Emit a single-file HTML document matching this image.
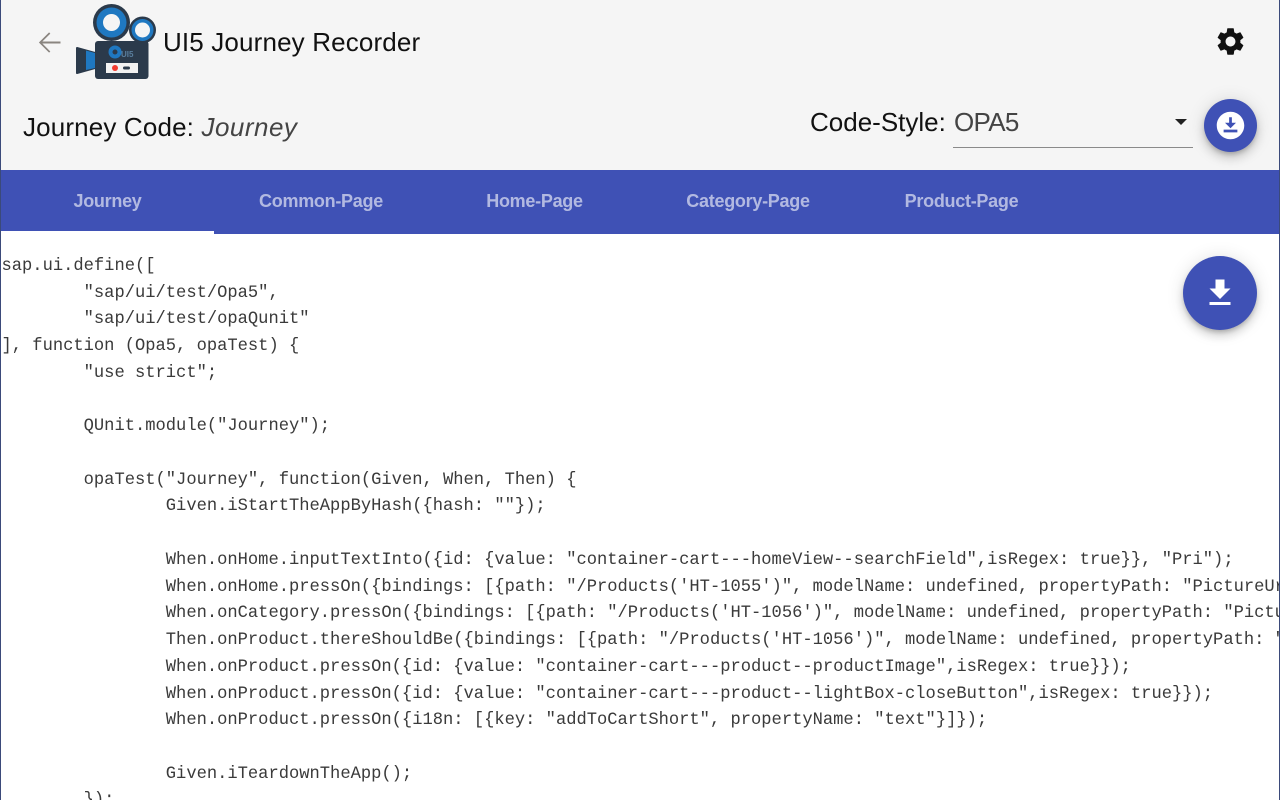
<!DOCTYPE html>
<html lang="en"><head><meta charset="utf-8"><title>UI5 Journey Recorder</title>
<style>
html,body{margin:0;padding:0;width:1280px;height:800px;overflow:hidden;background:#fff}
body{position:relative;font-family:"Liberation Sans",sans-serif;color:#111}
#all{position:absolute;left:0;top:0;width:1280px;height:800px;overflow:hidden;filter:blur(.35px)}
.a{position:absolute;white-space:nowrap}
#head{left:0;top:0;width:1280px;height:170px;background:#f5f5f5}
#bar{left:0;top:170px;width:1280px;height:64px;background:#3f51b5}
#ind{left:0;top:231px;width:214px;height:3px;background:#fff}
.tab{top:170px;height:62px;line-height:62px;width:214px;text-align:center;font-size:18px;font-weight:bold;color:rgba(255,255,255,.6);letter-spacing:-.28px}
#code{position:absolute;left:0;top:234px;width:1280px;height:566px;overflow:hidden}
pre{position:absolute;margin:0;left:1.500px;top:20px;font:17.12px/26.72px "Liberation Mono",monospace;color:#3a3a3a;tab-size:8;white-space:pre}
#edgeL{left:0;top:0;width:1px;height:800px;background:#3b4a7a}
#edgeR{left:1279px;top:0;width:1px;height:800px;background:#3b4a7a}
.fab{border-radius:50%;background:#3f51b5;box-shadow:0 3px 5px -1px rgba(0,0,0,.2),0 6px 10px 0 rgba(0,0,0,.14),0 1px 18px 0 rgba(0,0,0,.12)}
</style></head><body><div id="all">
<div class="a" id="head"></div>
<svg class="a" style="left:33px;top:26px" width="33" height="33" viewBox="0 0 24 24"><path fill="#8a8580" d="M20 11.300H6.800l5.800-5.800-.9-.9L4.300 12l7.400 7.400.9-.9-5.800-5.800H20z"/></svg>
<svg class="a" style="left:74px;top:0" width="84" height="84" viewBox="0 0 84 84">
<circle cx="37.500" cy="22.500" r="18.500" fill="#2b3a4b"/><circle cx="37.500" cy="22.500" r="15" fill="#1f78c1"/><circle cx="37.500" cy="22.500" r="8.500" fill="#f5f5f5"/>
<circle cx="68.500" cy="30" r="13.500" fill="#2b3a4b"/><circle cx="68.500" cy="30" r="11" fill="#1f78c1"/><circle cx="68.500" cy="30" r="7.500" fill="#f5f5f5"/>
<rect x="21" y="41" width="53.500" height="38" rx="3" fill="#2b3a4b"/>
<path d="M3 48l18 5v15l-18 5z" fill="#2b3a4b" stroke="#2b3a4b" stroke-width="2" stroke-linejoin="round"/><path d="M12 50.500l9 2.500v15l-9 2z" fill="#1f78c1"/>
<circle cx="41" cy="52" r="6.500" fill="#1f78c1"/><circle cx="41" cy="52" r="2.500" fill="#2b3a4b"/>
<text x="47" y="57" font-family="Liberation Sans" font-size="8" font-weight="bold" fill="#5a7f9f">UI5</text>
<rect x="32" y="63" width="32" height="10" fill="#f2f2f2"/><circle cx="41" cy="68" r="3" fill="#f23b30"/><rect x="49" y="66.500" width="7" height="3" rx="1.500" fill="#2b3a4b"/>
</svg>
<div class="a" style="left:163px;top:26px;font-size:26px;line-height:32px;letter-spacing:.15px">UI5 Journey Recorder</div>
<svg class="a" style="left:1214px;top:25px" width="33" height="33" viewBox="0 0 24 24"><path fill="#111" d="M19.140 12.940c.04-.3.06-.61.06-.94 0-.32-.02-.64-.07-.94l2.030-1.580c.18-.14.23-.41.12-.61l-1.920-3.320c-.12-.22-.37-.29-.59-.22l-2.390.96c-.5-.38-1.030-.7-1.620-.94l-.36-2.540c-.04-.24-.24-.41-.48-.41h-3.840c-.24 0-.43.17-.47.41l-.36 2.540c-.59.24-1.130.57-1.620.94l-2.390-.96c-.22-.08-.47 0-.59.22L2.740 8.870c-.12.21-.08.47.12.61l2.030 1.580c-.05.3-.09.63-.09.94s.02.64.07.94l-2.030 1.580c-.18.14-.23.41-.12.61l1.920 3.320c.12.22.37.29.59.22l2.390-.96c.5.38 1.030.7 1.620.94l.36 2.540c.05.24.24.41.48.41h3.840c.24 0 .44-.17.47-.41l.36-2.540c.59-.24 1.130-.56 1.620-.94l2.390.96c.22.08.47 0 .59-.22l1.920-3.320c.12-.22.07-.47-.12-.61l-2.010-1.580zM12 15.600c-1.980 0-3.600-1.620-3.600-3.600s1.620-3.600 3.600-3.600 3.600 1.620 3.600 3.600-1.620 3.600-3.600 3.600z"/></svg>
<div class="a" style="left:23px;top:111px;font-size:26px;line-height:32px;letter-spacing:.15px">Journey Code: <i style="color:#444;letter-spacing:.5px">Journey</i></div>
<div class="a" style="left:810px;top:106px;font-size:26px;line-height:32px">Code-Style:</div>
<div class="a" style="left:954px;top:106px;font-size:26px;line-height:32px;color:#444;letter-spacing:-.7px">OPA5</div>
<div class="a" style="left:1175px;top:119px;width:0;height:0;border-left:6px solid transparent;border-right:6px solid transparent;border-top:6px solid #222"></div>
<div class="a" style="left:953px;top:147px;width:240px;height:1px;background:#8a8a8a"></div>
<div class="a fab" style="left:1204px;top:99px;width:53px;height:53px"></div>
<svg class="a" style="left:1214px;top:109px" width="33" height="33" viewBox="0 0 24 24"><path fill="#fff" d="M12 2C6.490 2 2 6.490 2 12s4.490 10 10 10 10-4.490 10-10S17.510 2 12 2zm-1 8V6h2v4h3l-4 4-4-4h3zm6 7H7v-2h10v2z"/></svg>
<div class="a" id="bar"></div><div class="a" id="ind"></div>
<div class="a tab" style="left:.5px">Journey</div>
<div class="a tab" style="left:214px">Common-Page</div>
<div class="a tab" style="left:427.500px">Home-Page</div>
<div class="a tab" style="left:641px">Category-Page</div>
<div class="a tab" style="left:854.500px">Product-Page</div>
<div id="code"><pre>sap.ui.define([
	"sap/ui/test/Opa5",
	"sap/ui/test/opaQunit"
], function (Opa5, opaTest) {
	"use strict";

	QUnit.module("Journey");

	opaTest("Journey", function(Given, When, Then) {
		Given.iStartTheAppByHash({hash: ""});

		When.onHome.inputTextInto({id: {value: "container-cart---homeView--searchField",isRegex: true}}, "Pri");
		When.onHome.pressOn({bindings: [{path: "/Products('HT-1055')", modelName: undefined, propertyPath: "PictureUrl"}]});
		When.onCategory.pressOn({bindings: [{path: "/Products('HT-1056')", modelName: undefined, propertyPath: "PictureUrl"}]});
		Then.onProduct.thereShouldBe({bindings: [{path: "/Products('HT-1056')", modelName: undefined, propertyPath: "Name"}]});
		When.onProduct.pressOn({id: {value: "container-cart---product--productImage",isRegex: true}});
		When.onProduct.pressOn({id: {value: "container-cart---product--lightBox-closeButton",isRegex: true}});
		When.onProduct.pressOn({i18n: [{key: "addToCartShort", propertyName: "text"}]});

		Given.iTeardownTheApp();
	});</pre></div>
<div class="a fab" style="left:1183px;top:256px;width:74px;height:74px"></div>
<svg class="a" style="left:1202px;top:275px" width="36" height="36" viewBox="0 0 24 24"><path fill="#fff" d="M19 9h-4V3H9v6H5l7 7 7-7zM5 18v2h14v-2H5z"/></svg>
<div class="a" id="edgeL"></div><div class="a" id="edgeR"></div>
</div></body></html>
